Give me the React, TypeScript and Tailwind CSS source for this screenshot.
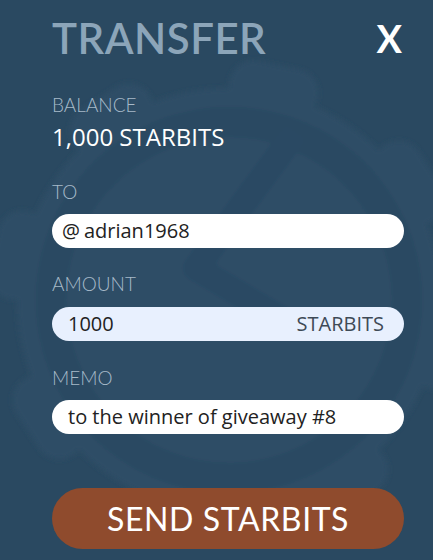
import { useState } from 'react';

// Faint cog shape behind the form
function Watermark() {
  const cx = 229;
  const cy = 300;
  const teeth = Array.from({ length: 8 }, (_, i) => (i * 360) / 8 + 12);
  return (
    <svg
      className="absolute inset-0 pointer-events-none"
      width={433}
      height={560}
      viewBox="0 0 433 560"
    >
      <defs>
        <filter id="soft" x="-10%" y="-10%" width="120%" height="120%">
          <feGaussianBlur stdDeviation="2.5" />
        </filter>
      </defs>
      <g filter="url(#soft)">
        <g fill="#2e4e66">
          <circle cx={cx} cy={cy} r={212} />
          {teeth.map(a => (
            <rect
              key={a}
              x={cx - 45}
              y={cy - 240}
              width={90}
              height={50}
              rx={24}
              transform={`rotate(${a} ${cx} ${cy})`}
            />
          ))}
        </g>
        <circle cx={cx} cy={cy} r={178} fill="none" stroke="#294862" strokeWidth={30} />
        <path
          d="M296 132 L196 268 L300 330"
          fill="none"
          stroke="#2b4a63"
          strokeWidth={26}
          strokeLinejoin="round"
        />
      </g>
    </svg>
  );
}

function Label({ children }: { children: React.ReactNode }) {
  return (
    <div className="text-[19px] leading-[19px] text-[#a7bac9] font-light" style={{ fontFamily: 'Lato, sans-serif' }}>
      {children}
    </div>
  );
}

export default function App() {
  const [to, setTo] = useState('adrian1968');
  const [amount, setAmount] = useState('1000');
  const [memo, setMemo] = useState('to the winner of giveaway #8');

  return (
    <div
      className="relative w-[433px] h-[560px] overflow-hidden bg-[#2a4961]"
      style={{ fontFamily: '"Open Sans", sans-serif' }}
    >
      <Watermark />
      <div className="relative flex flex-col pl-[52px] pr-[29px]">
        <div className="flex items-start justify-between pt-[17px]">
          <h1
            className="text-[42px] leading-[42px] font-semibold tracking-[0.5px] text-[#8ca5b9]"
            style={{ fontFamily: 'Lato, sans-serif' }}
          >
            TRANSFER
          </h1>
          <button
            className="text-[38px] leading-[42px] font-bold text-white mr-[2px]"
            style={{ fontFamily: 'Lato, sans-serif' }}
          >
            X
          </button>
        </div>

        <div className="mt-[36px]">
          <Label>BALANCE</Label>
        </div>
        <div className="mt-[11px] text-[24px] leading-[24px] text-white">1,000 STARBITS</div>

        <div className="mt-[33px]">
          <Label>TO</Label>
        </div>
        <div className="mt-[13px] h-[34px] rounded-full bg-white flex items-center pl-[10px] pr-4 text-[20px] text-[#222]">
          <span className="mr-[4px]">@</span>
          <input
            value={to}
            onChange={e => setTo(e.target.value)}
            className="flex-1 min-w-0 bg-transparent outline-none"
          />
        </div>

        <div className="mt-[26px]">
          <Label>AMOUNT</Label>
        </div>
        <div className="mt-[14px] h-[34px] rounded-full bg-[#e8f0fe] flex items-center pl-[16px] pr-[20px] text-[20px]">
          <input
            value={amount}
            onChange={e => setAmount(e.target.value)}
            className="flex-1 min-w-0 bg-transparent outline-none text-[#222]"
          />
          <span className="text-[#3e4a56]">STARBITS</span>
        </div>

        <div className="mt-[27px]">
          <Label>MEMO</Label>
        </div>
        <div className="mt-[13px] h-[34px] rounded-full bg-white flex items-center pl-[16px] pr-4 text-[20px] text-[#222]">
          <input
            value={memo}
            onChange={e => setMemo(e.target.value)}
            className="flex-1 min-w-0 bg-transparent outline-none"
          />
        </div>

        <button
          className="mt-[54px] h-[61px] rounded-full bg-[#8f4b2d] text-white text-[32px] tracking-[0.6px]"
          style={{ fontFamily: 'Lato, sans-serif' }}
        >
          SEND STARBITS
        </button>
      </div>
    </div>
  );
}
